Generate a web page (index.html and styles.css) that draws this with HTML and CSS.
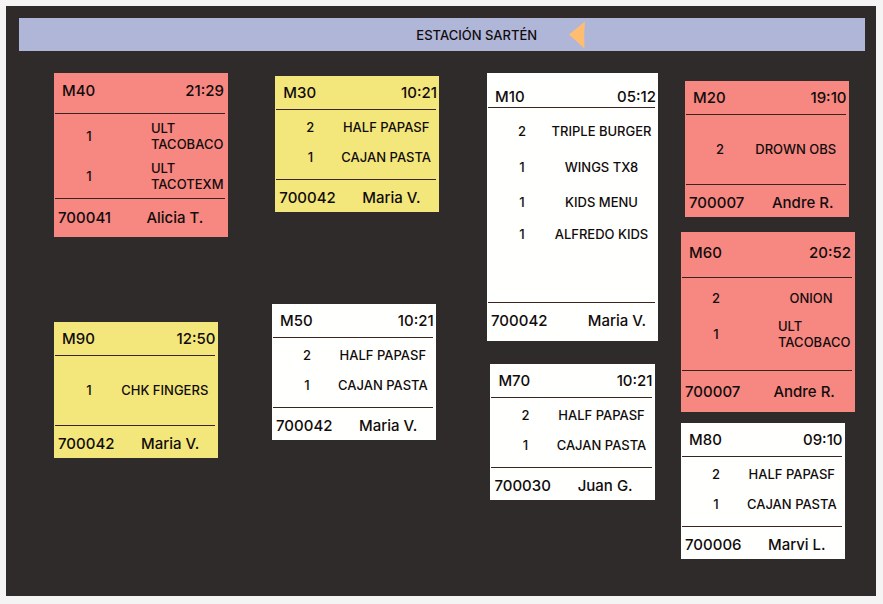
FILE: index.html
```
<!DOCTYPE html>
<html lang="es">
<head>
<meta charset="utf-8">
<meta name="viewport" content="width=device-width, initial-scale=1">
<title>Estación Sartén</title>
<link rel="stylesheet" href="styles.css">
</head>
<body>
<main class="board">
  <header class="station">
    <h1>ESTACIÓN SARTÉN</h1>
    <svg class="arrow" viewBox="0 0 17 28" aria-hidden="true"><path d="M0 13.5 16 0.5Q14.5 14 15.5 27.5Z" fill="#ffbd72"/></svg>
  </header>
  <div class="columns">
    <section class="column column-1">
      <article class="ticket late large">
        <header><h2>M40</h2><time>21:29</time></header>
        <ul>
          <li><span class="qty">1</span><span class="dish">ULT<br>TACOBACO</span></li>
          <li><span class="qty">1</span><span class="dish">ULT<br>TACOTEXM</span></li>
        </ul>
        <footer><span>700041</span><span>Alicia T.</span></footer>
      </article>
      <article class="ticket warning single">
        <header><h2>M90</h2><time>12:50</time></header>
        <ul>
          <li><span class="qty">1</span><span class="dish">CHK FINGERS</span></li>
        </ul>
        <footer><span>700042</span><span>Maria V.</span></footer>
      </article>
    </section>
    <section class="column column-2">
      <article class="ticket warning shifted">
        <header><h2>M30</h2><time>10:21</time></header>
        <ul>
          <li><span class="qty">2</span><span class="dish">HALF PAPASF</span></li>
          <li><span class="qty">1</span><span class="dish">CAJAN PASTA</span></li>
        </ul>
        <footer><span>700042</span><span>Maria V.</span></footer>
      </article>
      <article class="ticket">
        <header><h2>M50</h2><time>10:21</time></header>
        <ul>
          <li><span class="qty">2</span><span class="dish">HALF PAPASF</span></li>
          <li><span class="qty">1</span><span class="dish">CAJAN PASTA</span></li>
        </ul>
        <footer><span>700042</span><span>Maria V.</span></footer>
      </article>
    </section>
    <section class="column column-3">
      <article class="ticket long">
        <header><h2>M10</h2><time>05:12</time></header>
        <ul>
          <li><span class="qty">2</span><span class="dish">TRIPLE BURGER</span></li>
          <li><span class="qty">1</span><span class="dish">WINGS TX8</span></li>
          <li><span class="qty">1</span><span class="dish">KIDS MENU</span></li>
          <li><span class="qty">1</span><span class="dish">ALFREDO KIDS</span></li>
        </ul>
        <footer><span>700042</span><span>Maria V.</span></footer>
      </article>
      <article class="ticket">
        <header><h2>M70</h2><time>10:21</time></header>
        <ul>
          <li><span class="qty">2</span><span class="dish">HALF PAPASF</span></li>
          <li><span class="qty">1</span><span class="dish">CAJAN PASTA</span></li>
        </ul>
        <footer><span>700030</span><span>Juan G.</span></footer>
      </article>
    </section>
    <section class="column column-4">
      <article class="ticket late single shifted">
        <header><h2>M20</h2><time>19:10</time></header>
        <ul>
          <li><span class="qty">2</span><span class="dish">DROWN OBS</span></li>
        </ul>
        <footer><span>700007</span><span>Andre R.</span></footer>
      </article>
      <article class="ticket late large roomy">
        <header><h2>M60</h2><time>20:52</time></header>
        <ul>
          <li><span class="qty">2</span><span class="dish short">ONION</span></li>
          <li><span class="qty">1</span><span class="dish">ULT<br>TACOBACO</span></li>
        </ul>
        <footer><span>700007</span><span>Andre R.</span></footer>
      </article>
      <article class="ticket">
        <header><h2>M80</h2><time>09:10</time></header>
        <ul>
          <li><span class="qty">2</span><span class="dish">HALF PAPASF</span></li>
          <li><span class="qty">1</span><span class="dish">CAJAN PASTA</span></li>
        </ul>
        <footer><span>700006</span><span>Marvi L.</span></footer>
      </article>
    </section>
  </div>
</main>
</body>
</html>
```
FILE: styles.css
```
* {
  box-sizing: border-box;
}

body {
  margin: 0;
  padding: 6px 7px 8px 6px;
  background: #f5f4f4;
  color: #110c0c;
  font-family: Inter, "Open Sans", sans-serif;
  font-size: 13px;
  font-weight: 500;
  line-height: 16px;
}

h1,
h2,
ul {
  margin: 0;
  padding: 0;
  font: inherit;
}

.board {
  min-height: calc(100vh - 14px);
  padding: 12px 11px 32px 13px;
  background: #2f2b2a;
}

.station {
  display: flex;
  align-items: center;
  justify-content: center;
  gap: 32px;
  height: 33px;
  padding-left: 14%;
  background: #b0b6d8;
}

.arrow {
  width: 17px;
  height: 28px;
}

.columns {
  display: grid;
  grid-template-columns: 218fr 215fr 194fr 174fr;
  padding: 22px 10px 0 35px;
}

.column {
  display: flex;
  flex-direction: column;
  align-items: flex-start;
}

.column-1 {
  gap: 85px;
  padding-right: 44px;
}

.column-2 {
  gap: 92px;
  padding: 3px 48px 0 0;
}

.column-3 {
  align-items: center;
  gap: 23px;
  padding-right: 23px;
}

.column-4 {
  gap: 11px;
  padding-top: 8px;
}

.ticket {
  display: grid;
  grid-template-rows: 33px 71px 32px;
  width: 94%;
  background: #fffffe;
}

.column-2 .ticket {
  width: 98%;
}

.column-3 .ticket {
  width: 96%;
}

.column .large,
.column .long {
  width: 100%;
}

.column-2 .shifted {
  align-self: flex-end;
}

.column-4 .shifted {
  margin: 0 0 4px 4px;
}

.late {
  background: #f78781;
}

.warning {
  background: #f3e77b;
}

.large {
  grid-template-rows: 40px 86px 38px;
}

.roomy {
  grid-template-rows: 45px 94px 41px;
}

.long {
  grid-template-rows: 34px 196px 38px;
}

.ticket header,
.ticket footer {
  display: flex;
  align-items: center;
  font-size: 15px;
  line-height: 20px;
}

.ticket header {
  justify-content: space-between;
  padding: 0 2px 0 8px;
}

.large header {
  padding: 0 4px 4px 8px;
}

.long header {
  align-items: flex-end;
}

.ticket footer {
  display: grid;
  grid-template-columns: 52% 1fr;
  padding: 4px 0 0 4px;
}

.large footer,
.long footer {
  padding: 0 0 0 4px;
}

.long footer {
  grid-template-columns: 58% 1fr;
  padding-bottom: 2px;
}

.ticket ul {
  display: grid;
  grid-auto-rows: 30px;
  margin: 0 3px 0 1px;
  padding: 2px 0 0 26px;
  border: solid #3a2420;
  border-width: 1px 0;
  list-style: none;
}

.large ul {
  grid-auto-rows: 40px;
}

.roomy ul {
  grid-auto-rows: 36px;
}

.long ul {
  grid-template-rows: 36px 36px 34px 30px;
  padding-top: 5px;
}

.single ul {
  align-content: center;
  padding: 0 0 2px 26px;
}

.ticket li {
  display: grid;
  grid-template-columns: 16px 1fr;
  gap: 18px;
  align-items: center;
}

.large li {
  gap: 54px;
}

.qty,
.dish {
  text-align: center;
  white-space: nowrap;
}

.large .dish {
  text-align: left;
}

.large .short {
  padding-right: 8px;
  text-align: center;
}
```
